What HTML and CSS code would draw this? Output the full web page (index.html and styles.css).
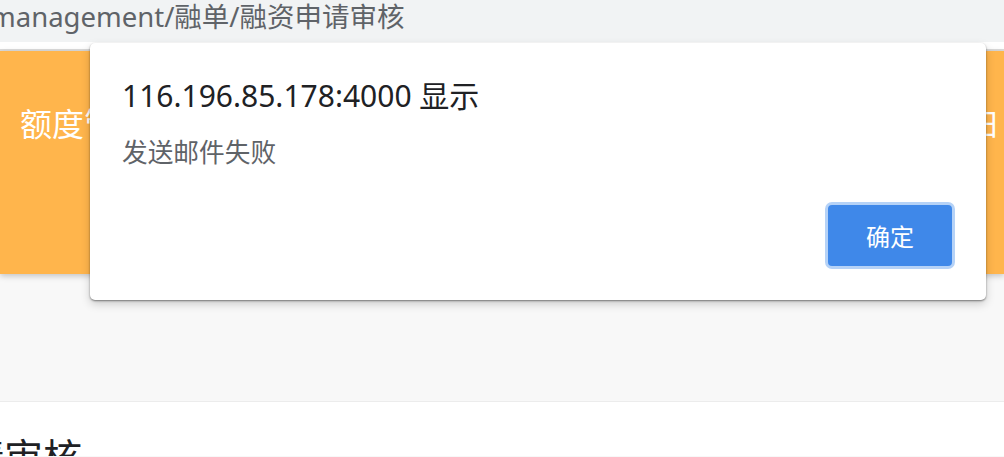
FILE: index.html
```html
<!DOCTYPE html>
<html lang="zh-CN">
<head>
<meta charset="utf-8">
<title>融资申请审核</title>
<link rel="stylesheet" href="styles.css">
</head>
<body>
<div class="urlbar"><span class="url">management/融单/融资申请审核</span></div>
<div class="page">
  <div class="topstrip"></div>
  <div class="banner">
    <span class="banner-title">额度管理</span>
    <span class="banner-right">日</span>
  </div>
  <div class="spacer"></div>
  <div class="content">
    <h1 class="content-title">申请审核</h1>
  </div>
</div>
<div class="dialog">
  <div class="dialog-title">116.196.85.178:4000 显示</div>
  <div class="dialog-msg">发送邮件失败</div>
  <div class="dialog-actions">
    <button class="btn-ok">确定</button>
  </div>
</div>
</body>
</html>
```
FILE: styles.css
```css
html, body {
  margin: 0;
  padding: 0;
}
body {
  width: 1004px;
  height: 457px;
  overflow: hidden;
  position: relative;
  background: #f8f8f8;
  font-family: "Noto Sans", "Noto Sans CJK SC", sans-serif;
}
.urlbar {
  height: 42px;
  background: #f1f3f4;
  overflow: hidden;
  white-space: nowrap;
}
.url {
  display: block;
  margin-left: -10px;
  font-size: 27.5px;
  line-height: 34px;
  color: #5f6368;
}
.page {
  display: flex;
  flex-direction: column;
}
.topstrip {
  height: 7px;
  background: #ffffff;
  border-bottom: 2px solid #dcdcdc;
}
.banner {
  height: 223px;
  background: #ffb54c;
  box-shadow: 0 2px 6px rgba(0,0,0,0.22);
  display: flex;
  justify-content: space-between;
  align-items: flex-start;
  color: #ffffff;
  font-size: 32px;
  white-space: nowrap;
  overflow: hidden;
}
.banner-title {
  margin-left: 20px;
  margin-top: 53px;
  line-height: 40px;
}
.banner-right {
  margin-right: 4px;
  margin-top: 53px;
  line-height: 40px;
  font-size: 30px;
}
.spacer {
  height: 127px;
}
.content {
  background: #ffffff;
  border-top: 1px solid #ececec;
  height: 54px;
  overflow: hidden;
  white-space: nowrap;
}
.content-title {
  margin: 30px 0 0 -74px;
  font-size: 39px;
  font-weight: 400;
  color: #202124;
  line-height: 50px;
}
.dialog {
  position: absolute;
  left: 90px;
  top: 43px;
  width: 896px;
  height: 257px;
  background: #ffffff;
  border-radius: 5px;
  box-shadow: 0 1px 2px rgba(0,0,0,0.45), 0 4px 10px rgba(0,0,0,0.18);
  box-sizing: border-box;
  padding: 33px 32px 0 32px;
  display: flex;
  flex-direction: column;
}
.dialog-title {
  font-size: 30px;
  line-height: 40px;
  color: #202124;
}
.dialog-msg {
  margin-top: 22px;
  font-size: 25.7px;
  line-height: 30px;
  color: #5f6368;
}
.dialog-actions {
  display: flex;
  justify-content: flex-end;
  margin-top: 34px;
  margin-right: -1px;
}
.btn-ok {
  width: 130px;
  height: 67px;
  box-sizing: border-box;
  background: #3f88e9;
  border: 3px solid #b5d2f7;
  border-radius: 7px;
  color: #ffffff;
  font-family: "Noto Sans", "Noto Sans CJK SC", sans-serif;
  font-size: 24px;
  padding: 0;
}
```
